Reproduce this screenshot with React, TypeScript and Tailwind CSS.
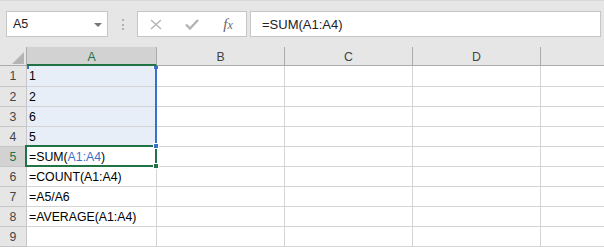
import React from 'react';

// column widths measured from the sheet (border included)
const cols = [
  { key: 'A', w: 'w-[130px]' },
  { key: 'B', w: 'w-[128px]' },
  { key: 'C', w: 'w-[128px]' },
  { key: 'D', w: 'w-[128px]' },
];

const rows: { n: number; a: React.ReactNode; h: string; range?: boolean; active?: boolean }[] = [
  { n: 1, a: '1', h: 'h-[21px]', range: true },
  { n: 2, a: '2', h: 'h-[20px]', range: true },
  { n: 3, a: '6', h: 'h-[20px]', range: true },
  { n: 4, a: '5', h: 'h-[20px]', range: true },
  {
    n: 5,
    a: (
      <>
        =SUM(<span className="text-[#3c6fc8]">A1:A4</span>)
      </>
    ),
    h: 'h-[20px]',
    active: true,
  },
  { n: 6, a: '=COUNT(A1:A4)', h: 'h-[20px]' },
  { n: 7, a: '=A5/A6', h: 'h-[20px]' },
  { n: 8, a: '=AVERAGE(A1:A4)', h: 'h-[20px]' },
  { n: 9, a: '', h: 'h-[20px]' },
];

function NameBox() {
  return (
    <div className="w-[102px] h-[26px] shrink-0 bg-white border border-[#c6c6c6] flex items-center justify-between pl-[6px] pr-[5px] pt-[1px]">
      <span className="text-[12.5px] text-[#222]">A5</span>
      <span className="w-0 h-0 border-l-[4px] border-r-[4px] border-t-[4px] border-l-transparent border-r-transparent border-t-[#777]" />
    </div>
  );
}

function Dots() {
  return (
    <div className="ml-[14px] mt-[8px] flex flex-col gap-[2.5px]">
      <span className="block w-[2px] h-[2px] bg-[#b0b0b0]" />
      <span className="block w-[2px] h-[2px] bg-[#b0b0b0]" />
      <span className="block w-[2px] h-[2px] bg-[#b0b0b0]" />
    </div>
  );
}

function FormulaButtons() {
  return (
    <div className="ml-[13px] w-[110px] h-[26px] shrink-0 bg-white border border-[#c6c6c6] flex">
      <div className="w-[36px] flex items-center justify-center">
        <svg width="12" height="11" viewBox="0 0 12 11">
          <path d="M1 1 L11 10 M11 1 L1 10" stroke="#b4b4b4" strokeWidth="1.4" fill="none" />
        </svg>
      </div>
      <div className="w-[36px] flex items-center justify-center">
        <svg width="14" height="11" viewBox="0 0 14 11">
          <path d="M1 5.5 L5 9.5 L13 1" stroke="#b4b4b4" strokeWidth="2.4" fill="none" />
        </svg>
      </div>
      <div className="w-[36px] flex items-center justify-center">
        <span className="font-['Liberation_Serif',serif] italic text-[15px] text-[#666] leading-none">
          f<span className="text-[12px]">x</span>
        </span>
      </div>
    </div>
  );
}

export default function App() {
  return (
    <div className="w-[604px] h-[247px] overflow-hidden relative bg-white font-['Liberation_Sans',Arial,sans-serif] text-[12.3px] text-black">
      {/* formula bar strip */}
      <div className="h-[47px] bg-[#e6e6e6] border-t border-[#d8d8d8] flex items-start pt-[10px] pl-[6px]">
        <NameBox />
        <Dots />
        <FormulaButtons />
        <div className="ml-[3px] w-[351px] h-[26px] shrink-0 bg-white border border-[#c6c6c6] flex items-center pl-[11px] pt-[1px]">
          <span className="text-[13px] text-[#222]">=SUM(A1:A4)</span>
        </div>
      </div>

      {/* column headers */}
      <div className="flex h-[19px] bg-[#e6e6e6]">
        <div className="w-[27px] shrink-0 border-r border-b border-[#ababab] flex items-end justify-end pr-[2px] pb-[1px]">
          <svg width="12" height="12" viewBox="0 0 12 12">
            <polygon points="12,0 12,12 0,12" fill="#b4b4b4" />
          </svg>
        </div>
        {cols.map(c =>
          c.key === 'A' ? (
            <div
              key={c.key}
              className={`${c.w} shrink-0 bg-[#d2d2d2] border-r border-[#ababab] border-b-2 border-b-[#217346] text-center text-[#217346] pt-[2px] leading-[16px]`}
            >
              {c.key}
            </div>
          ) : (
            <div
              key={c.key}
              className={`${c.w} shrink-0 border-r border-b border-[#ababab] text-center text-[#444] pt-[2px] leading-[16px]`}
            >
              {c.key}
            </div>
          ),
        )}
        <div className="flex-1 border-b border-[#ababab]" />
      </div>

      {/* rows */}
      {rows.map(r => (
        <div key={r.n} className={`flex ${r.h}`}>
          <div
            className={`w-[27px] shrink-0 border-r border-b border-[#c6c6c6] text-center pt-[3px] leading-[15px] ${
              r.active ? 'bg-[#d2d2d2] text-[#217346]' : 'bg-[#e6e6e6] text-[#444]'
            }`}
          >
            {r.n}
          </div>
          <div
            className={`w-[130px] shrink-0 border-r border-b border-[#d4d4d4] pl-[2px] pt-[3px] leading-[15px] whitespace-nowrap ${
              r.range ? 'bg-[#e8eef8]' : ''
            }`}
          >
            {r.a}
          </div>
          <div className="w-[128px] shrink-0 border-r border-b border-[#d4d4d4]" />
          <div className="w-[128px] shrink-0 border-r border-b border-[#d4d4d4]" />
          <div className="w-[128px] shrink-0 border-r border-b border-[#d4d4d4]" />
          <div className="flex-1 border-b border-[#d4d4d4]" />
        </div>
      ))}

      {/* referenced range A1:A4 outline */}
      <div className="absolute left-[155px] top-[66px] w-[2px] h-[79px] bg-[#3c6fc8]" />
      <div className="absolute left-[27px] top-[66px] w-[2px] h-[3px] bg-[#3c6fc8]" />
      <div className="absolute left-[153px] top-[66px] w-[6px] h-[3px] bg-[#3c6fc8] border-l border-r border-white" />

      {/* active cell A5 */}
      <div className="absolute left-[25px] top-[145px] w-[132px] h-[22px] border-2 border-[#217346]" />
      <div className="absolute left-[153px] top-[143px] w-[6px] h-[6px] bg-[#3c6fc8] border border-white" />
      <div className="absolute left-[153px] top-[163px] w-[6px] h-[6px] bg-[#217346] border border-white" />
    </div>
  );
}
